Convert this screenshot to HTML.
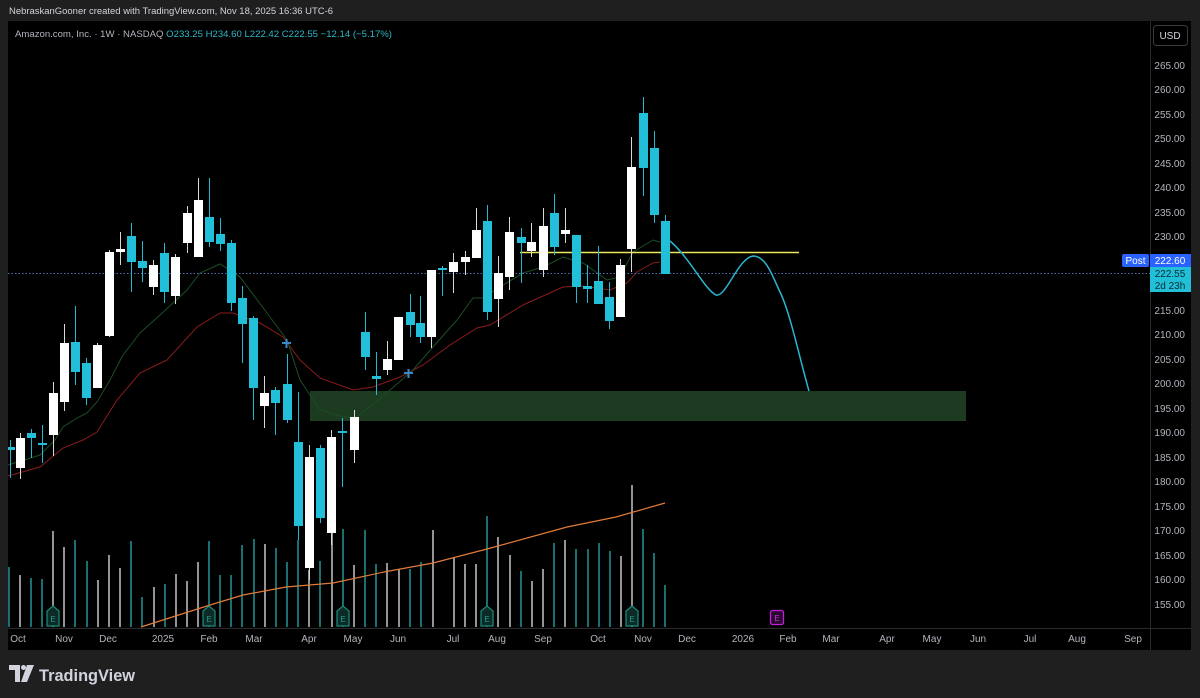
<!DOCTYPE html>
<html><head><meta charset="utf-8"><style>
html,body{margin:0;padding:0;background:#1f1f1f;width:1200px;height:698px;overflow:hidden;font-family:"Liberation Sans",sans-serif}
svg{position:absolute;left:0;top:0}
</style></head><body>
<svg width="1200" height="698" viewBox="0 0 1200 698" xmlns="http://www.w3.org/2000/svg" font-family="Liberation Sans, sans-serif">
<rect x="0" y="0" width="1200" height="698" fill="#1f1f1f"/>
<text x="9" y="14" font-size="9.6" fill="#d1d4dc" textLength="324" lengthAdjust="spacingAndGlyphs">NebraskanGooner created with TradingView.com, Nov 18, 2025 16:36 UTC-6</text>
<rect x="8" y="21" width="1183" height="629" fill="#000"/>
<line x1="1150.5" y1="21" x2="1150.5" y2="650" stroke="#2a2a2a"/>
<line x1="8" y1="628.5" x2="1191" y2="628.5" stroke="#2a2a2a"/>
<text x="15" y="37" font-size="9.5" fill="#b2b5be" textLength="377" lengthAdjust="spacingAndGlyphs">Amazon.com, Inc. · 1W · NASDAQ <tspan fill="#2fb8c8">O233.25  H234.60  L222.42  C222.55  −12.14 (−5.17%)</tspan></text>
<rect x="1153.5" y="25.5" width="34" height="20" rx="3" fill="#000" stroke="#3a3a3a"/>
<text x="1170" y="39" font-size="10" fill="#d1d4dc" text-anchor="middle">USD</text>
<g font-size="10" fill="#b2b5be" text-anchor="end">
<text x="1185" y="69">265.00</text><text x="1185" y="93">260.00</text><text x="1185" y="118">255.00</text><text x="1185" y="142">250.00</text><text x="1185" y="167">245.00</text><text x="1185" y="191">240.00</text><text x="1185" y="216">235.00</text><text x="1185" y="240">230.00</text><text x="1185" y="314">215.00</text><text x="1185" y="338">210.00</text><text x="1185" y="363">205.00</text><text x="1185" y="387">200.00</text><text x="1185" y="412">195.00</text><text x="1185" y="436">190.00</text><text x="1185" y="461">185.00</text><text x="1185" y="485">180.00</text><text x="1185" y="510">175.00</text><text x="1185" y="534">170.00</text><text x="1185" y="559">165.00</text><text x="1185" y="583">160.00</text><text x="1185" y="608">155.00</text>
</g>
<g font-size="10" fill="#b2b5be" text-anchor="middle">
<text x="18" y="642">Oct</text><text x="64" y="642">Nov</text><text x="108" y="642">Dec</text><text x="163" y="642">2025</text><text x="209" y="642">Feb</text><text x="254" y="642">Mar</text><text x="309" y="642">Apr</text><text x="353" y="642">May</text><text x="398" y="642">Jun</text><text x="453" y="642">Jul</text><text x="497" y="642">Aug</text><text x="543" y="642">Sep</text><text x="598" y="642">Oct</text><text x="643" y="642">Nov</text><text x="687" y="642">Dec</text><text x="743" y="642">2026</text><text x="788" y="642">Feb</text><text x="831" y="642">Mar</text><text x="887" y="642">Apr</text><text x="932" y="642">May</text><text x="978" y="642">Jun</text><text x="1030" y="642">Jul</text><text x="1077" y="642">Aug</text><text x="1133" y="642">Sep</text>
</g>
<rect x="310" y="391" width="656" height="30" fill="#1d3b20"/>
<g stroke-width="1.6">
<path stroke="#1f8c8c" d="M9 627V567M31 627V578M42 627V579M75 627V540M87 627V561M131 627V541M142 627V597M165 627V584M209 627V541M220 627V575M231 627V575M242 627V545M254 627V539M276 627V548M287 627V562M298 627V540M320 627V561M343 627V529M365 627V530M376 627V564M410 627V569M421 627V562M487 627V516M521 627V571M554 627V543M576 627V549M588 627V549M599 627V543M610 627V551M643 627V529M654 627V553M665 627V585"/>
<path stroke="#b8b8b8" d="M20 627V575M53 627V531M64 627V547M98 627V580M109 627V555M120 627V568M154 627V587M176 627V574M187 627V581M198 627V562M265 627V544M309 627V570M332 627V533M354 627V565M387 627V563M399 627V569M433 627V530M454 627V557M465 627V564M476 627V564M498 627V537M510 627V555M532 627V581M543 627V569M565 627V540M621 627V556M632 627V485"/>
</g>
<polyline fill="none" stroke="#e07b39" stroke-width="1.2" points="141,627 210,605 243,595 286,587 333,583 384,572 433,563 487,549 567,527 616,517 665,503"/>
<g fill="#0c2a26" stroke="#1f8c7c" stroke-width="1.2">
<path d="M47 626V611L53 606L59 611V626Z"/><path d="M203 626V611L209 606L215 611V626Z"/><path d="M337 626V611L343 606L349 611V626Z"/><path d="M481 626V611L487 606L493 611V626Z"/><path d="M626 626V611L632 606L638 611V626Z"/>
</g>
<g font-size="8" fill="#1f9c8c" text-anchor="middle"><text x="53" y="622">E</text><text x="209" y="622">E</text><text x="343" y="622">E</text><text x="487" y="622">E</text><text x="632" y="622">E</text></g>
<rect x="770.5" y="610.5" width="13" height="14" rx="2" fill="#2a0a30" stroke="#c41ed8" stroke-width="1.3"/>
<text x="777" y="621" font-size="8" fill="#d22ee0" text-anchor="middle">E</text>
<polyline fill="none" stroke="#8a1c1c" stroke-width="1" points="8,476 40,467 63,448 83,440 97,432 117,400 140,373 167,360 197,327 220,313 233,313 260,323 283,337 300,360 320,378 353,390 373,387 400,377 423,365 450,345 477,328 490,325 523,305 563,287 583,286 610,290 627,283 637,272 653,263 660,262"/>
<polyline fill="none" stroke="#1b4d24" stroke-width="1" points="8,465 40,455 55,440 63,427 77,418 87,413 97,402 110,380 123,355 140,333 160,315 173,303 187,290 200,273 220,264 240,277 267,313 287,340 300,380 320,410 343,417 357,417 390,390 413,370 433,347 457,320 473,298 483,298 500,287 523,273 543,267 563,257 583,263 607,280 620,277 633,252 653,240 660,242"/>
<line x1="8" y1="273.5" x2="1150" y2="273.5" stroke="#4c6fb5" stroke-width="1" stroke-dasharray="1.5,2"/>
<line x1="520" y1="252.5" x2="799" y2="252.5" stroke="#ece65a" stroke-width="1.6"/>
<g stroke="#d8d8d8" stroke-width="1">
<path d="M20.5 433V479M53.5 382V456M64.5 324V411M97.5 343V388M109.5 250V337M120.5 232V265M153.5 260V295M175.5 254V304M187.5 206V253M198.5 178V257M264.5 376V428M309.5 445V580M331.5 430V545M354.5 410V463M387.5 341V375M398.5 317V360M431.5 270V348M453.5 253V293M465.5 251V275M476.5 208V258M498.5 256V327M509.5 217V290M531.5 223V257M543.5 208V277M565.5 208V243M620.5 259V317M631.5 137V272"/>
</g>
<g fill="#ffffff">
<rect x="16" y="438" width="9" height="30"/><rect x="49" y="393" width="9" height="42"/><rect x="60" y="343" width="9" height="59"/><rect x="93" y="345" width="9" height="43"/><rect x="105" y="252" width="9" height="84"/><rect x="116" y="249" width="9" height="3"/><rect x="149" y="265" width="9" height="22"/><rect x="171" y="257" width="9" height="39"/><rect x="183" y="213" width="9" height="30"/><rect x="194" y="200" width="9" height="57"/><rect x="260" y="393" width="9" height="13"/><rect x="305" y="457" width="9" height="111"/><rect x="327" y="437" width="9" height="96"/><rect x="350" y="417" width="9" height="33"/><rect x="383" y="359" width="9" height="11"/><rect x="394" y="317" width="9" height="43"/><rect x="427" y="270" width="9" height="67"/><rect x="449" y="262" width="9" height="10"/><rect x="461" y="257" width="9" height="5"/><rect x="472" y="230" width="9" height="28"/><rect x="494" y="273" width="9" height="26"/><rect x="505" y="232" width="9" height="45"/><rect x="527" y="242" width="9" height="9"/><rect x="539" y="226" width="9" height="44"/><rect x="561" y="230" width="9" height="4"/><rect x="616" y="265" width="9" height="52"/><rect x="627" y="167" width="9" height="82"/>
</g>
<g stroke="#22b8d0" stroke-width="1">
<path d="M10.5 440V478M31.5 429V458M42.5 425V463M75.5 306V385M86.5 358V405M131.5 223V292M142.5 241V282M164.5 243V303M209.5 178V247M220.5 218V251M231.5 240V311M242.5 286V363M253.5 316V420M275.5 387V435M287.5 354V423M298.5 392V540M320.5 445V523M342.5 418V487M365.5 312V370M376.5 352V395M410.5 294V337M420.5 296V343M442.5 266V296M487.5 205V320M521.5 228V283M554.5 194V255M576.5 235V303M587.5 265V303M598.5 246V304M609.5 282V329M643.5 97V196M654.5 131V223M665.5 215V274"/>
</g>
<g fill="#22c0d8">
<rect x="8" y="447" width="7" height="3"/><rect x="27" y="433" width="9" height="5"/><rect x="38" y="443" width="9" height="2"/><rect x="71" y="342" width="9" height="30"/><rect x="82" y="363" width="9" height="35"/><rect x="127" y="236" width="9" height="26"/><rect x="138" y="261" width="9" height="7"/><rect x="160" y="253" width="9" height="39"/><rect x="205" y="217" width="9" height="25"/><rect x="216" y="234" width="9" height="10"/><rect x="227" y="243" width="9" height="60"/><rect x="238" y="298" width="9" height="26"/><rect x="249" y="318" width="9" height="70"/><rect x="271" y="390" width="9" height="13"/><rect x="283" y="384" width="9" height="36"/><rect x="294" y="442" width="9" height="84"/><rect x="316" y="448" width="9" height="70"/><rect x="338" y="431" width="9" height="2"/><rect x="361" y="332" width="9" height="25"/><rect x="372" y="376" width="9" height="3"/><rect x="406" y="312" width="9" height="13"/><rect x="416" y="323" width="9" height="14"/><rect x="438" y="268" width="9" height="2"/><rect x="483" y="221" width="9" height="91"/><rect x="517" y="237" width="9" height="6"/><rect x="550" y="213" width="9" height="34"/><rect x="572" y="235" width="9" height="52"/><rect x="583" y="286" width="9" height="3"/><rect x="594" y="281" width="9" height="23"/><rect x="605" y="297" width="9" height="24"/><rect x="639" y="113" width="9" height="55"/><rect x="650" y="148" width="9" height="67"/><rect x="661" y="221" width="9" height="53"/>
</g>
<g stroke="#3a88c8" stroke-width="2"><path d="M282 343H291M286.5 339V348M404 373H413M408.5 369V378"/></g>
<path fill="none" stroke="#2bb5d0" stroke-width="1.5" d="M670 241C690 258 705 290 716 295C726 298 738 258 753 256C766 256 772 275 780 292C790 312 800 360 809 391"/>
<rect x="1122" y="254" width="27" height="13" rx="2" fill="#2962ff"/>
<text x="1135.5" y="264" font-size="10" fill="#fff" text-anchor="middle">Post</text>
<rect x="1150" y="254" width="41" height="13" fill="#2962ff"/>
<text x="1170" y="264" font-size="10" fill="#fff" text-anchor="middle">222.60</text>
<rect x="1150" y="267" width="41" height="25" fill="#22c0d8"/>
<text x="1170" y="277" font-size="10" fill="#0a2a30" text-anchor="middle">222.55</text>
<text x="1170" y="289" font-size="10" fill="#0a2a30" text-anchor="middle">2d 23h</text>
<g fill="#d1d4dc">
<path d="M9 665H20V682H15V670H9Z"/><circle cx="23.5" cy="667.5" r="2.5"/><path d="M27 665H34L27 682H21Z"/>
</g>
<text x="39" y="681" font-size="17" font-weight="bold" fill="#d1d4dc" textLength="96" lengthAdjust="spacingAndGlyphs">TradingView</text>
</svg>
</body></html>
